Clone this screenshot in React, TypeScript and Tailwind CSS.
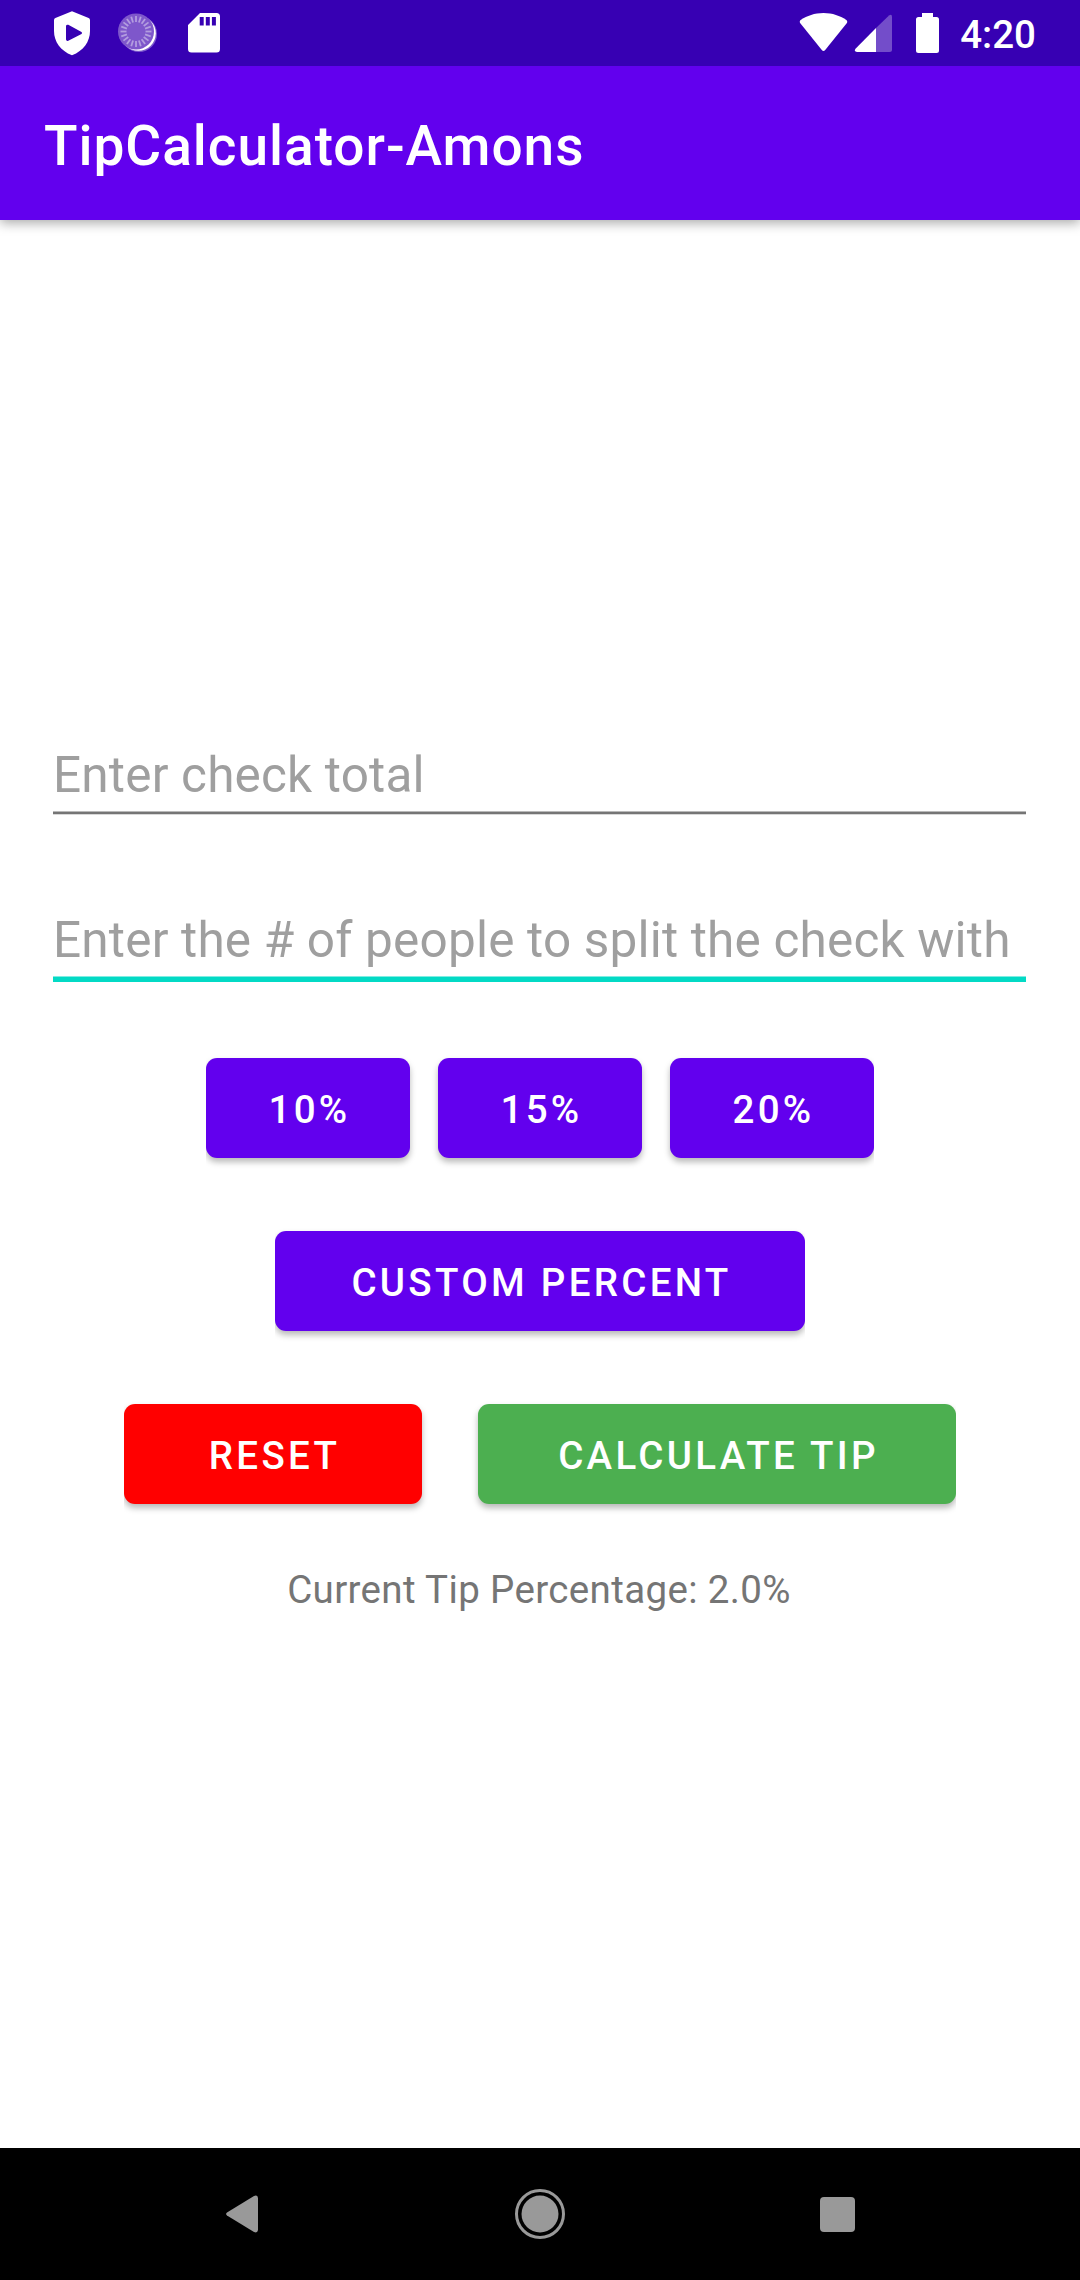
import type { ReactNode } from "react";

const ticks = Array.from({ length: 20 }, (_, i) => i * 18);

function StatusBar() {
  return (
    <div className="relative z-10 flex h-[66px] items-start justify-between bg-[#3700b3] text-white">
      <div className="flex h-full pl-[52px]">
        <svg className="h-[66px] w-[40px]" viewBox="52 0 40 66" fill="currentColor">
          <path
            fillRule="evenodd"
            d="M72 11.3 88.6 18q1.4.6 1.4 2.200V31c0 10.500-6.500 20-18 24.200C60.500 51 54 41.500 54 31V20.200q0-1.600 1.400-2.200ZM66 26v13.500q.3 2 2.300 1.300L81.500 34q1.200-1 0-2L68.300 24.800q-2-.6-2.300 1.200Z"
          />
        </svg>
        <svg className="ml-[24px] h-[66px] w-[44px]" viewBox="116 0 44 66">
          <circle cx="139" cy="34" r="18" fill="#fff" opacity="0.35" />
          <circle cx="138.300" cy="33.300" r="17.500" fill="#fff" />
          <circle cx="136" cy="31.500" r="18" fill="#7e57cb" />
          <g stroke="#b39ddf" strokeWidth="1.800">
            {ticks.map((a) => (
              <path key={a} d="M136 16v6" transform={`rotate(${a} 136 31.500)`} />
            ))}
          </g>
        </svg>
        <svg className="ml-[26px] h-[66px] w-[36px]" viewBox="186 0 36 66" fill="currentColor">
          <path
            fillRule="evenodd"
            d="M200 13h16.500q3.500 0 3.500 3.500v32.500q0 3.500-3.500 3.500h-25q-3.500 0-3.500-3.500V25ZM199.700 17v8.500h4v-8.500ZM205.800 17v8.500h4v-8.500ZM211.900 17v8.500h4v-8.500Z"
          />
        </svg>
      </div>
      <div className="flex h-full pr-[44px]">
        <svg className="h-[66px] w-[150px]" viewBox="796 0 150 66" fill="currentColor">
          <path d="M823.500 13c9 0 16.500 2.800 22.500 6.800q2.200 1.500.5 3.700L825.200 50q-1.700 2-3.400 0L800.500 23.500q-1.700-2.200.5-3.700C807 15.800 814.500 13 823.500 13Z" />
          <path opacity="0.3" d="M876 28 889 15.600q3-2 3 1.400V49.500q0 2.500-2.500 2.500H876Z" />
          <path d="M876 28V52H857q-3.500-.5-1.500-3.200Z" />
          <path d="M922 13h11v4h3.500q2.500 0 2.500 2.500V50.500q0 2.500-2.500 2.500h-18q-2.500 0-2.500-2.500V19.500q0-2.500 2.500-2.500h3.500Z" />
        </svg>
        <span className="mt-[12px] ml-[14px] text-[38.500px] leading-[46px] font-medium">4:20</span>
      </div>
    </div>
  );
}

function Field({ hint, focused = false }: { hint: string; focused?: boolean }) {
  return (
    <div className="flex h-[70px] w-[974px] flex-col pr-px">
      <span className="h-[66px] shrink-0 text-[49.500px] leading-[60px] tracking-[0.18px] whitespace-nowrap text-[#9f9f9f]">
        {hint}
      </span>
      {focused ? (
        <div className="h-[6px] shrink-0 border-t border-[#81ece2] bg-[#03dac5]" />
      ) : (
        <div className="h-[4px] shrink-0 border-y border-t-[#b9b9b9] border-b-[#d8d8d8] bg-[#757575]" />
      )}
    </div>
  );
}

function Button({ className, children }: { className: string; children: ReactNode }) {
  return (
    <button
      className={`flex h-[100px] items-center justify-center rounded-[11px] pt-[4px] pl-[3px] text-[38.500px] leading-[46px] font-medium tracking-[3.3px] whitespace-nowrap text-white shadow-[0_4px_6px_rgba(0,0,0,0.28)] ${className}`}
    >
      {children}
    </button>
  );
}

export default function App() {
  return (
    <div className="flex h-[2280px] w-[1080px] flex-col overflow-hidden bg-white font-['Roboto',sans-serif]">
      <StatusBar />
      <header className="relative flex h-[154px] items-center bg-[#6200ee] pt-[6px] pl-[44px] shadow-[0_3px_11px_rgba(0,0,0,0.34)]">
        <h1 className="text-[55px] leading-[64px] font-medium tracking-[0.97px] text-white">TipCalculator-Amons</h1>
      </header>
      <main className="flex flex-1 flex-col items-center pt-[525px]">
        <Field hint="Enter check total" />
        <div className="mt-[95px]">
          <Field hint="Enter the # of people to split the check with" focused />
        </div>
        <div className="mt-[78px] flex gap-[28px] overflow-x-clip">
          <Button className="w-[204px] bg-[#6200ee]">10%</Button>
          <Button className="w-[204px] bg-[#6200ee]">15%</Button>
          <Button className="w-[204px] bg-[#6200ee]">20%</Button>
        </div>
        <div className="mt-[73px] overflow-x-clip">
          <Button className="w-[530px] bg-[#6200ee]">CUSTOM PERCENT</Button>
        </div>
        <div className="mt-[73px] flex gap-[56px] overflow-x-clip">
          <Button className="w-[298px] bg-[#ff0000]">RESET</Button>
          <Button className="w-[478px] bg-[#4caf50]">CALCULATE TIP</Button>
        </div>
        <p className="mt-[63px] pr-[2px] text-[38.500px] leading-[46px] tracking-[0.36px] text-[#757575]">
          Current Tip Percentage: 2.0%
        </p>
      </main>
      <nav className="flex h-[132px] items-center bg-black text-[#999999]">
        <svg className="ml-[222px] h-[60px] w-[40px]" viewBox="222 2184 40 60" fill="currentColor">
          <path d="M227 2212.500 254 2196q3.500-1.500 4 2v32q-.5 3.500-4 2L227 2215.500q-1.800-1.500 0-3Z" />
        </svg>
        <svg className="ml-[248px] h-[60px] w-[60px]" viewBox="510 2184 60 60" fill="currentColor">
          <circle cx="540" cy="2214" r="23.500" fill="none" stroke="currentColor" strokeWidth="3" />
          <circle cx="540" cy="2214" r="18.500" />
        </svg>
        <div className="ml-[249.5px] h-[35px] w-[35px] rounded-[4px] bg-[#999999]" />
      </nav>
    </div>
  );
}
